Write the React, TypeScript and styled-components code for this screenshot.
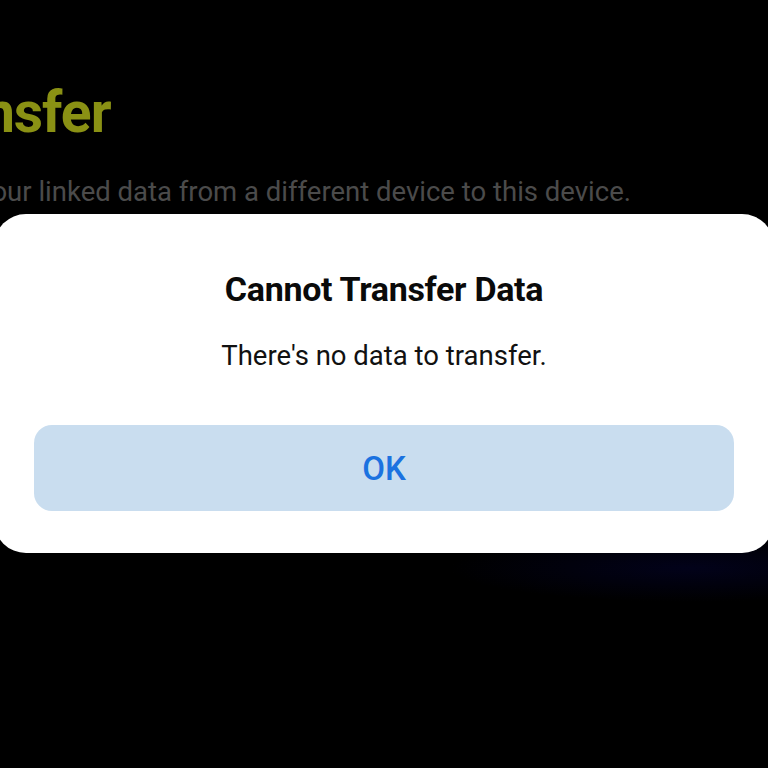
import styled, { createGlobalStyle } from "styled-components";

const GlobalStyle = createGlobalStyle`
  html, body {
    margin: 0;
    padding: 0;
    background: #000;
    overflow: hidden;
  }

  body {
    font-family: Roboto, "Noto Sans", sans-serif;
  }
`;

export default function App() {
  return (
    <>
      <GlobalStyle/>
      <Screen>
        <Header>
          <PageTitle>Data Transfer</PageTitle>
          <PageSubtitle>Transfer your linked data from a different device to this device.</PageSubtitle>
        </Header>
      </Screen>

      <Overlay>
        <Dialog role="alertdialog">
          <DialogTitle>Cannot Transfer Data</DialogTitle>
          <DialogText>There's no data to transfer.</DialogText>
          <DialogButton>OK</DialogButton>
        </Dialog>
      </Overlay>
    </>
  );
}

const Screen = styled.div`
  width: 768px;
  height: 768px;
  overflow: hidden;
  background: radial-gradient(ellipse 240px 34px at 690px 568px, #02021a 0%, #000 100%);
`;

const Header = styled.div`
  display: flex;
  flex-direction: column;
  align-items: flex-end;
  width: 631px;
  padding-top: 80px;
`;

const PageTitle = styled.div`
  align-self: flex-start;
  margin-left: -223px;
  font-size: 57px;
  font-weight: 700;
  letter-spacing: -1px;
  color: #8a9114;
  line-height: 66px;
  white-space: nowrap;
`;

const PageSubtitle = styled.div`
  margin-top: 30px;
  font-size: 27.5px;
  color: #4b4b4b;
  white-space: nowrap;
  line-height: 32px;
`;

const Overlay = styled.div`
  position: fixed;
  inset: 0;
  display: flex;
  justify-content: center;
  align-items: flex-start;
  padding-top: 214px;
`;

const Dialog = styled.div`
  flex: none;
  width: 780px;
  box-sizing: border-box;
  padding: 55px 40px 42px;
  background: #fff;
  border-radius: 32px;
  display: flex;
  flex-direction: column;
  align-items: stretch;
`;

const DialogTitle = styled.div`
  text-align: center;
  font-size: 34px;
  font-weight: 700;
  color: #0a0a0a;
  line-height: 40px;
  letter-spacing: -0.3px;
`;

const DialogText = styled.div`
  margin-top: 30px;
  text-align: center;
  font-size: 27.5px;
  color: #111;
  line-height: 34px;
`;

const DialogButton = styled.button`
  margin-top: 52px;
  height: 86px;
  border: none;
  border-radius: 18px;
  background: #c9ddef;
  color: #1b72e0;
  font-family: inherit;
  font-size: 33px;
  font-weight: 500;
  cursor: pointer;
`;
